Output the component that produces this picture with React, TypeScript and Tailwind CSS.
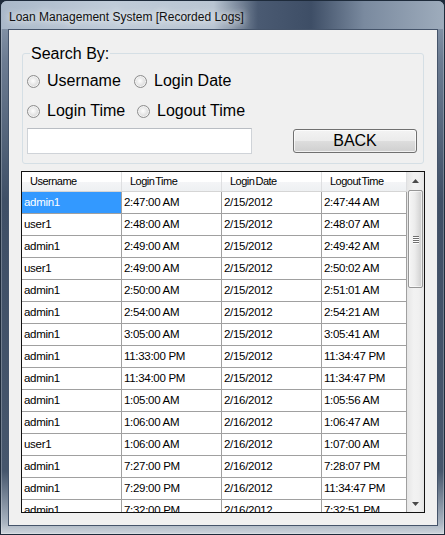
import React from "react";

const rows: [string, string, string, string][] = [
  ["admin1", "2:47:00 AM", "2/15/2012", "2:47:44 AM"],
  ["user1", "2:48:00 AM", "2/15/2012", "2:48:07 AM"],
  ["admin1", "2:49:00 AM", "2/15/2012", "2:49:42 AM"],
  ["user1", "2:49:00 AM", "2/15/2012", "2:50:02 AM"],
  ["admin1", "2:50:00 AM", "2/15/2012", "2:51:01 AM"],
  ["admin1", "2:54:00 AM", "2/15/2012", "2:54:21 AM"],
  ["admin1", "3:05:00 AM", "2/15/2012", "3:05:41 AM"],
  ["admin1", "11:33:00 PM", "2/15/2012", "11:34:47 PM"],
  ["admin1", "11:34:00 PM", "2/15/2012", "11:34:47 PM"],
  ["admin1", "1:05:00 AM", "2/16/2012", "1:05:56 AM"],
  ["admin1", "1:06:00 AM", "2/16/2012", "1:06:47 AM"],
  ["user1", "1:06:00 AM", "2/16/2012", "1:07:00 AM"],
  ["admin1", "7:27:00 PM", "2/16/2012", "7:28:07 PM"],
  ["admin1", "7:29:00 PM", "2/16/2012", "11:34:47 PM"],
  ["admin1", "7:32:00 PM", "2/16/2012", "7:32:51 PM"],
];

const colW = ["w-[100px]", "w-[100px]", "w-[100px]", "w-[85px]"];
const headers = ["Username", "Login Time", "Login Date", "Logout Time"];

function Radio({ label }: { label: string }) {
  return (
    <div className="flex items-center">
      <span className="w-[13px] h-[13px] rounded-full border border-[#8d8d8d] bg-[radial-gradient(circle_at_45%_45%,#ffffff_0%,#e6e6e6_45%,#c4c4c4_100%)] shadow-[inset_0_0_0_1px_#f4f4f4]" />
      <span className="ml-[7px] text-[16px] leading-[20px] text-black">{label}</span>
    </div>
  );
}

export default function App() {
  return (
    <div className="w-[445px] h-[535px] overflow-hidden bg-[#1d2a3a] font-['Liberation_Sans',Arial,sans-serif]">
      <div className="w-[445px] h-[535px] rounded-t-[7px] border border-[#1e2b3b] bg-[linear-gradient(180deg,#93a2b5_0px,#6c7c92_60px,#3f4f66_200px,#46566c_470px,#a9b4c1_522px,#d2d8df_534px)] flex flex-col shadow-[inset_0_0_0_1px_rgba(255,255,255,0.25)]">
        {/* Title bar */}
        <div className="h-[28px] rounded-t-[6px] flex items-center pt-[3px] pl-[8px] bg-[linear-gradient(90deg,#a9b8c9_0%,#c0ccd9_25%,#b9c5d2_48%,#4a5a72_58%,#3e4e66_70%,#7a8a9f_82%,#9eacbc_100%)]">
          <span className="text-[12px] leading-[14px] text-[#111] [text-shadow:0_0_6px_rgba(255,255,255,0.95),0_0_12px_rgba(255,255,255,0.8)]">
            Loan Management System [Recorded Logs]
          </span>
        </div>

        {/* Client area */}
        <div className="ml-[7px] w-[430px] h-[497px] border border-[#45546a] bg-[#f0f0f0] flex flex-col">
          {/* Group box */}
          <div className="relative ml-[13px] mt-[23px] w-[402px] h-[111px] border border-[#d5dfe5] rounded-[3px] pt-[17px] pl-[4px]">
            <span className="absolute left-[7px] top-[-9px] px-[1px] bg-[#f0f0f0] text-[16px] leading-[18px] text-black">
              Search By:
            </span>
            <div className="flex items-center h-[20px]">
              <div className="w-[107px]">
                <Radio label="Username" />
              </div>
              <Radio label="Login Date" />
            </div>
            <div className="flex items-center h-[20px] mt-[10px]">
              <div className="w-[110px]">
                <Radio label="Login Time" />
              </div>
              <Radio label="Logout Time" />
            </div>
            <div className="flex items-start mt-[7px]">
              <div className="w-[225px] h-[26px] bg-white border border-[#cfd3d8] border-t-[#b9bdc3]" />
              <button className="ml-[41px] mt-[1px] w-[124px] h-[24px] rounded-[3px] border border-[#707070] bg-[linear-gradient(180deg,#f3f3f3_0%,#ebebeb_48%,#dddddd_52%,#cfcfcf_100%)] shadow-[inset_0_0_0_1px_rgba(255,255,255,0.7)] text-[16px] leading-[20px] text-black">
                BACK
              </button>
            </div>
          </div>

          {/* Data grid */}
          <div className="ml-[12px] mt-[7px] w-[404px] h-[342px] border border-[#111] bg-white flex overflow-hidden">
            <div className="w-[385px] flex flex-col overflow-hidden">
              <div className="h-[20px] shrink-0 flex bg-[linear-gradient(180deg,#ffffff_0%,#ffffff_50%,#f4f5f7_51%,#eef0f2_100%)] border-b border-[#d5d5d5]">
                {headers.map((h, i) => (
                  <div
                    key={h}
                    className={`${colW[i]} shrink-0 h-full flex items-center pl-[8px] border-r border-[#dedfe1] text-[11px] tracking-[-0.5px] [word-spacing:-1.5px] text-black`}
                  >
                    {h}
                  </div>
                ))}
              </div>
              {rows.map((r, ri) => (
                <div key={ri} className="h-[22px] shrink-0 flex border-b border-[#a0a0a0]">
                  {r.map((c, ci) => (
                    <div
                      key={ci}
                      className={`${colW[ci]} shrink-0 h-full flex items-center pl-[2px] pt-[1px] border-r border-[#a0a0a0] text-[11.5px] tracking-[-0.3px] whitespace-nowrap overflow-hidden ${
                        ri === 0 && ci === 0 ? "bg-[#3399ff] text-white" : "text-black"
                      }`}
                    >
                      {c}
                    </div>
                  ))}
                </div>
              ))}
            </div>

            {/* Scrollbar */}
            <div className="w-[17px] h-full flex flex-col bg-[linear-gradient(90deg,#e6e6e6_0%,#f2f2f2_40%,#f0f0f0_70%,#e4e4e4_100%)]">
              <div className="h-[17px] flex items-center justify-center">
                <svg width="7" height="4" viewBox="0 0 7 4">
                  <polygon points="0,4 3.5,0 7,4" fill="#4a4a4a" />
                </svg>
              </div>
              <div className="mt-[1px] ml-[1px] w-[15px] h-[98px] rounded-[2px] border border-[#979797] bg-[linear-gradient(90deg,#f6f6f6_0%,#ececec_45%,#dcdcdc_75%,#cdcdcd_100%)] shadow-[inset_0_0_0_1px_rgba(255,255,255,0.6)] flex flex-col items-center justify-center gap-[1px]">
                {[0, 1, 2, 3].map((k) => (
                  <div key={k} className="w-[6px] h-[1px] bg-[#707070] shadow-[0_1px_0_#ffffff]" />
                ))}
              </div>
              <div className="flex-1" />
              <div className="h-[17px] flex items-center justify-center">
                <svg width="7" height="4" viewBox="0 0 7 4">
                  <polygon points="0,0 7,0 3.5,4" fill="#4a4a4a" />
                </svg>
              </div>
            </div>
          </div>
        </div>
      </div>
    </div>
  );
}
